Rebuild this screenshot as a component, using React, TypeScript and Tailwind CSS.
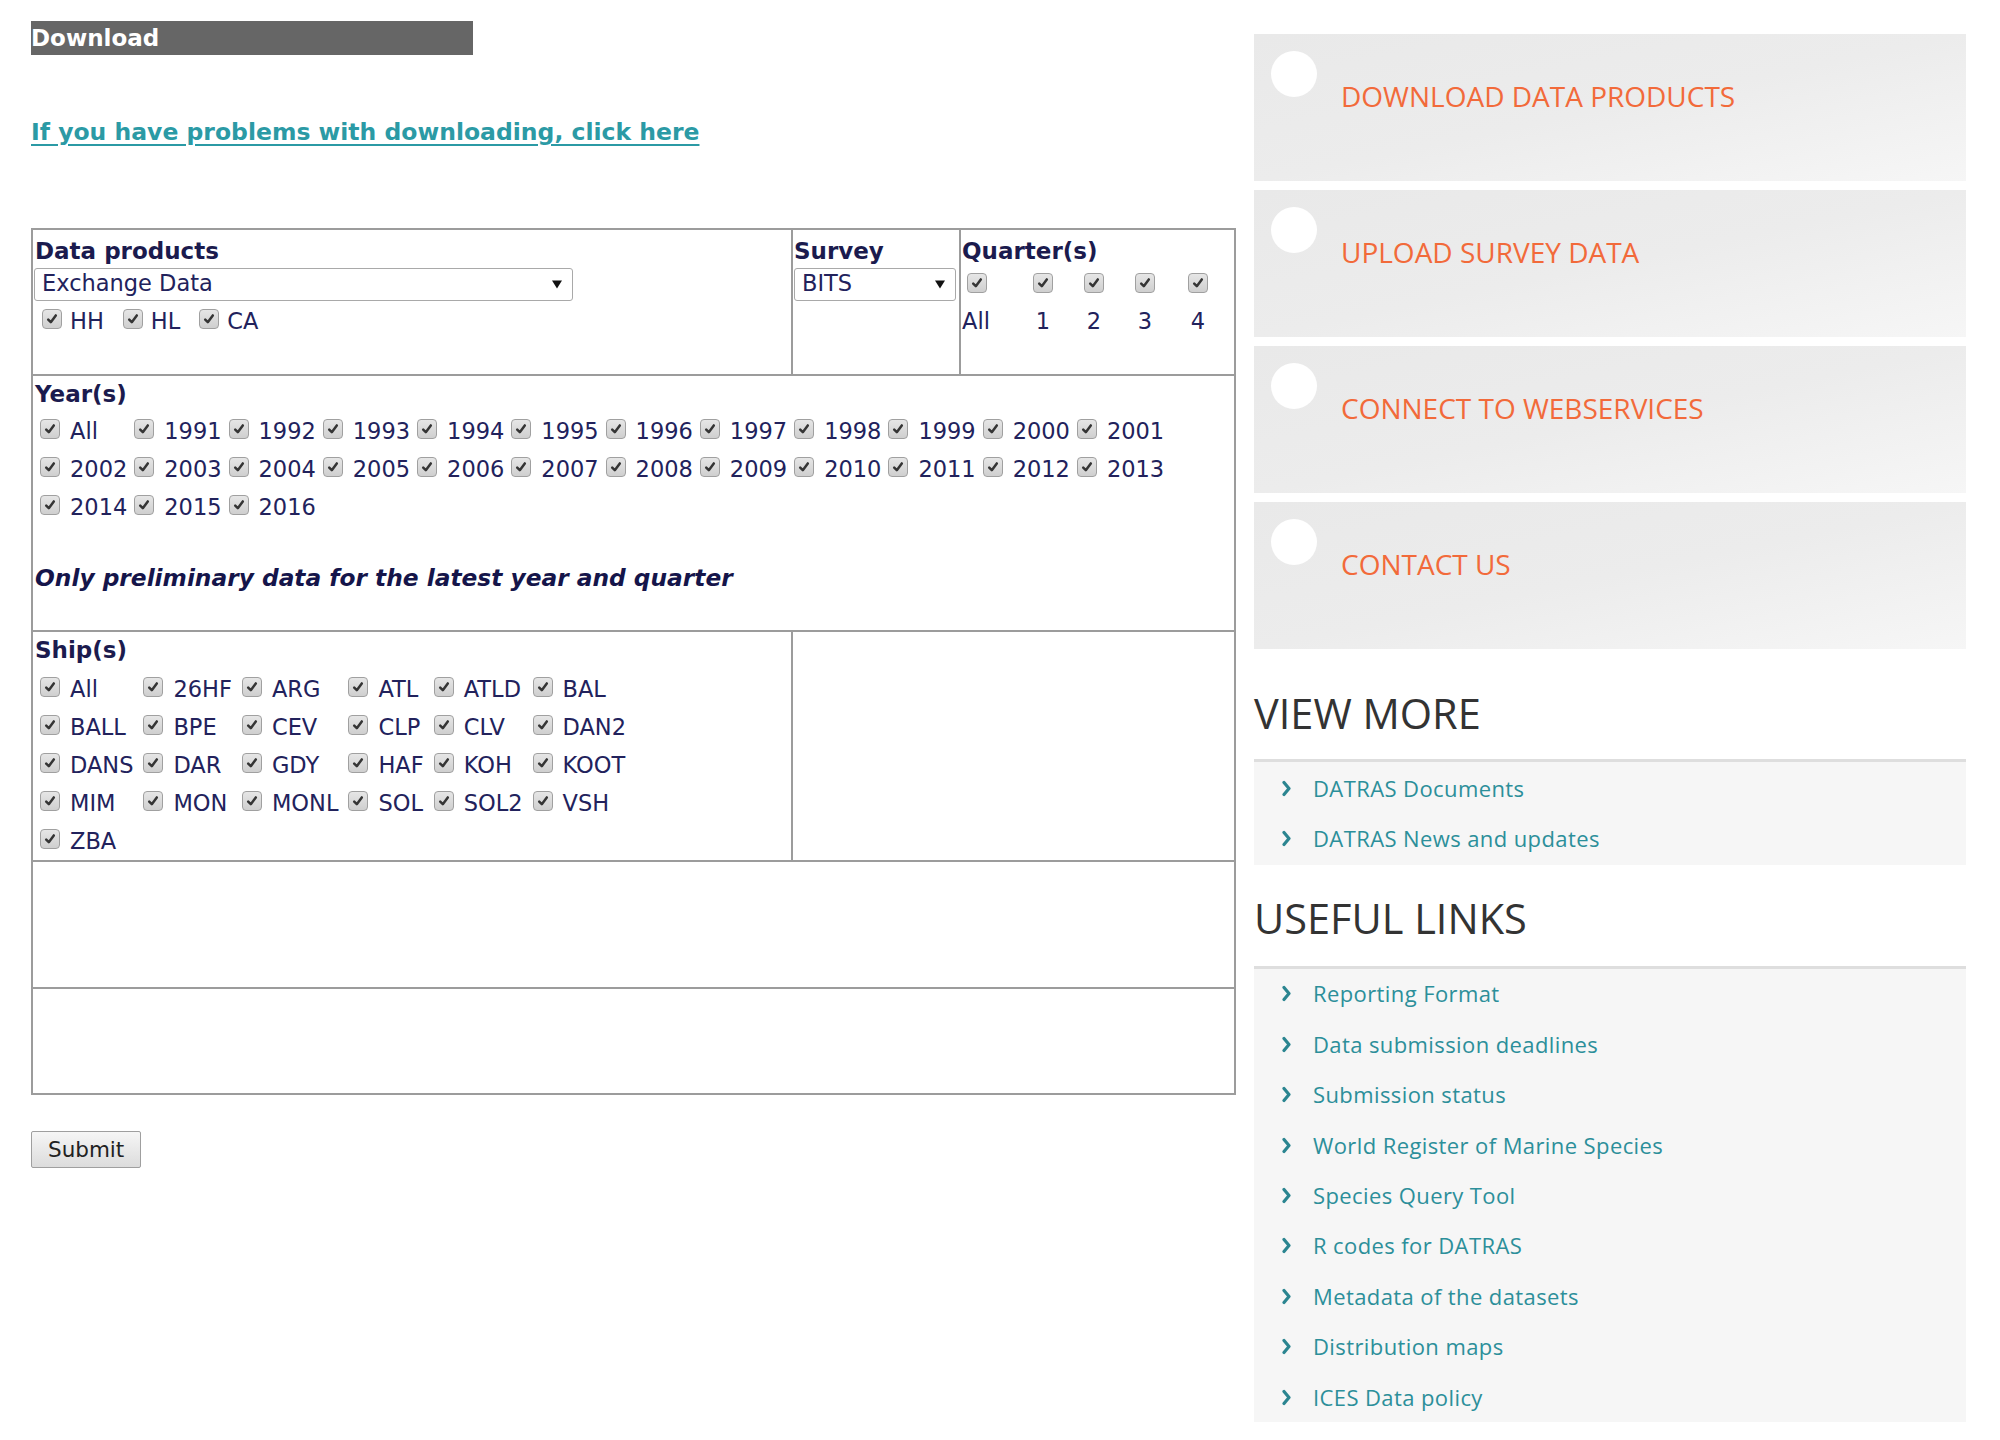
const years = [
  ["All", "1991", "1992", "1993", "1994", "1995", "1996", "1997", "1998", "1999", "2000", "2001"],
  ["2002", "2003", "2004", "2005", "2006", "2007", "2008", "2009", "2010", "2011", "2012", "2013"],
  ["2014", "2015", "2016"],
];

const ships = [
  ["All", "26HF", "ARG", "ATL", "ATLD", "BAL"],
  ["BALL", "BPE", "CEV", "CLP", "CLV", "DAN2"],
  ["DANS", "DAR", "GDY", "HAF", "KOH", "KOOT"],
  ["MIM", "MON", "MONL", "SOL", "SOL2", "VSH"],
  ["ZBA"],
];

const cards = ["DOWNLOAD DATA PRODUCTS", "UPLOAD SURVEY DATA", "CONNECT TO WEBSERVICES", "CONTACT US"];

const viewMore = ["DATRAS Documents", "DATRAS News and updates"];

const usefulLinks = [
  "Reporting Format",
  "Data submission deadlines",
  "Submission status",
  "World Register of Marine Species",
  "Species Query Tool",
  "R codes for DATRAS",
  "Metadata of the datasets",
  "Distribution maps",
  "ICES Data policy",
];

const Check = () => (
  <span className="inline-flex h-[20px] w-[20px] shrink-0 items-center justify-center rounded-[4px] border border-[#a0a0a0] bg-linear-to-b from-[#e6e6e6] to-[#cfcfcf]">
    <svg viewBox="0 0 12 12" className="h-[12px] w-[12px]">
      <path d="M2.2 6.6 L4.8 9.2 L9.8 2.4" stroke="#353535" strokeWidth="2.5" fill="none" strokeLinecap="round" strokeLinejoin="round" />
    </svg>
  </span>
);

const Item = ({ label, pad }: { label: string; pad: string }) => (
  <div className={`flex h-[38px] items-center ${pad}`}>
    <span className="ml-[5px] mr-[10px] -mt-[6px] flex">
      <Check />
    </span>
    <span>{label}</span>
  </div>
);

const Select = ({ value, className }: { value: string; className: string }) => (
  <div
    className={`flex h-[33px] items-center justify-between rounded-[3px] border border-[#a9a9a9] bg-white pl-[7px] pr-[10px] ${className}`}
  >
    <span>{value}</span>
    <svg viewBox="0 0 10 8" className="h-[9px] w-[10px]">
      <path d="M0 0 H10 L5 8 Z" fill="#111" />
    </svg>
  </div>
);

const SideLink = ({ text }: { text: string }) => (
  <div className="flex h-[50.4px] items-center pl-[28px] text-[#2c8f9a]">
    <svg viewBox="0 0 9 16" className="mr-[22px] h-[17px] w-[9px]">
      <path d="M2 2 L7 8 L2 14" stroke="#2b8590" strokeWidth="3.2" fill="none" strokeLinecap="round" strokeLinejoin="round" />
    </svg>
    <span>{text}</span>
  </div>
);

export default function App() {
  return (
    <div className="flex min-h-[1440px] w-[2000px] bg-white">
      {/* left: download form */}
      <div className="w-[1254px] shrink-0 pl-[31px] pt-[21px] font-['DejaVu_Sans',sans-serif] text-[22.5px] text-[#22225c]">
        <div className="h-[34px] w-[442px] bg-[#666] text-[23px] leading-[34px] font-bold text-white">Download</div>

        <a href="#" className="mt-[60px] block w-max text-[23.5px] font-bold text-[#2b9aa5] underline underline-offset-[4px]">
          If you have problems with downloading, click here
        </a>

        <div className="mt-[78px] w-[1205px] border-2 border-[#9c9c9c]">
          {/* data products / survey / quarters */}
          <div className="grid h-[146px] grid-cols-[758px_168px_1fr] border-b-2 border-[#9c9c9c]">
            <div className="pl-[2px] pt-[4px]">
              <div className="text-[23px] font-bold text-[#1b1b4e]">Data products</div>
              <Select value="Exchange Data" className="mt-[-1px] ml-[-1px] w-[539px]" />
              <div className="mt-[4px] flex">
                {["HH", "HL", "CA"].map((t) => (
                  <div key={t} className="flex items-center pr-[12px]">
                    <span className="ml-[7px] mr-[8px] -mt-[6px] flex">
                      <Check />
                    </span>
                    <span>{t}</span>
                  </div>
                ))}
              </div>
            </div>
            <div className="border-l-2 border-[#9c9c9c] pl-[1px] pt-[4px]">
              <div className="text-[23px] font-bold text-[#1b1b4e]">Survey</div>
              <Select value="BITS" className="mt-[-1px] w-[162px]" />
            </div>
            <div className="border-l-2 border-[#9c9c9c] pl-[1px] pt-[4px]">
              <div className="text-[23px] font-bold text-[#1b1b4e]">Quarter(s)</div>
              <div className="mt-[4px] grid w-max grid-cols-[56px_50px_52px_50px_56px]">
                {["All", "1", "2", "3", "4"].map((q, i) => (
                  <div key={q} className={`flex flex-col ${i === 0 ? "items-start" : "items-center"}`}>
                    <span className={`${i === 0 ? "ml-[5px]" : ""} flex`}>
                      <Check />
                    </span>
                    <span className="mt-[12px]">{q}</span>
                  </div>
                ))}
              </div>
            </div>
          </div>

          {/* years */}
          <div className="h-[256px] border-b-2 border-[#9c9c9c] pl-[2px] pt-[1px]">
            <div className="text-[23px] font-bold text-[#1b1b4e]">Year(s)</div>
            <div className="mt-[1px] grid w-max grid-cols-[repeat(12,auto)]">
              {years.flat().map((y, i) => (
                <Item key={i} label={y} pad="pr-[2px]" />
              ))}
            </div>
            <div className="mt-[34px] text-[23.3px] font-bold italic text-[#15154a]">
              Only preliminary data for the latest year and quarter
            </div>
          </div>

          {/* ships */}
          <div className="grid h-[230px] grid-cols-[758px_1fr] border-b-2 border-[#9c9c9c]">
            <div className="pl-[2px] pt-[1px]">
              <div className="text-[23px] font-bold text-[#1b1b4e]">Ship(s)</div>
              <div className="mt-[3px] grid w-max grid-cols-[repeat(6,auto)]">
                {ships.flat().map((s, i) => (
                  <Item key={i} label={s} pad="pr-[5px]" />
                ))}
              </div>
            </div>
            <div className="border-l-2 border-[#9c9c9c]" />
          </div>

          <div className="h-[127px] border-b-2 border-[#9c9c9c]" />
          <div className="h-[104px]" />
        </div>

        <button className="mt-[36px] h-[37px] rounded-[2px] border border-[#9f9f9f] bg-linear-to-b from-[#f6f6f6] to-[#dcdcdc] px-[16px] text-[21.5px] text-[#222]">
          Submit
        </button>
      </div>

      {/* right: sidebar */}
      <div className="w-[712px] pt-[34px] font-['Open_Sans',sans-serif]">
        <div className="flex flex-col gap-[9px]">
          {cards.map((c) => (
            <div key={c} className="flex h-[147px] items-start bg-linear-to-br from-[#e9e9e9] via-[#ececec] to-[#f6f6f6]">
              <div className="ml-[17px] mt-[17px] h-[46px] w-[46px] rounded-full bg-white" />
              <div className="ml-[24px] mt-[42px] text-[28px] leading-[40px] text-[#f26a3a]">{c}</div>
            </div>
          ))}
        </div>

        <div className="mt-[38px] text-[41.5px] leading-[52px] text-[#333]">VIEW MORE</div>
        <div className="mt-[20px] border-t-[3px] border-[#dedede] bg-[#f6f6f6] py-[1px] text-[22px] tracking-[0.4px]">
          {viewMore.map((t) => (
            <SideLink key={t} text={t} />
          ))}
        </div>

        <div className="mt-[27px] text-[41.5px] leading-[52px] text-[#333]">USEFUL LINKS</div>
        <div className="mt-[22px] border-t-[3px] border-[#dedede] bg-[#f6f6f6] pb-[0px] text-[22px] tracking-[0.4px]">
          {usefulLinks.map((t) => (
            <SideLink key={t} text={t} />
          ))}
        </div>
      </div>
    </div>
  );
}
